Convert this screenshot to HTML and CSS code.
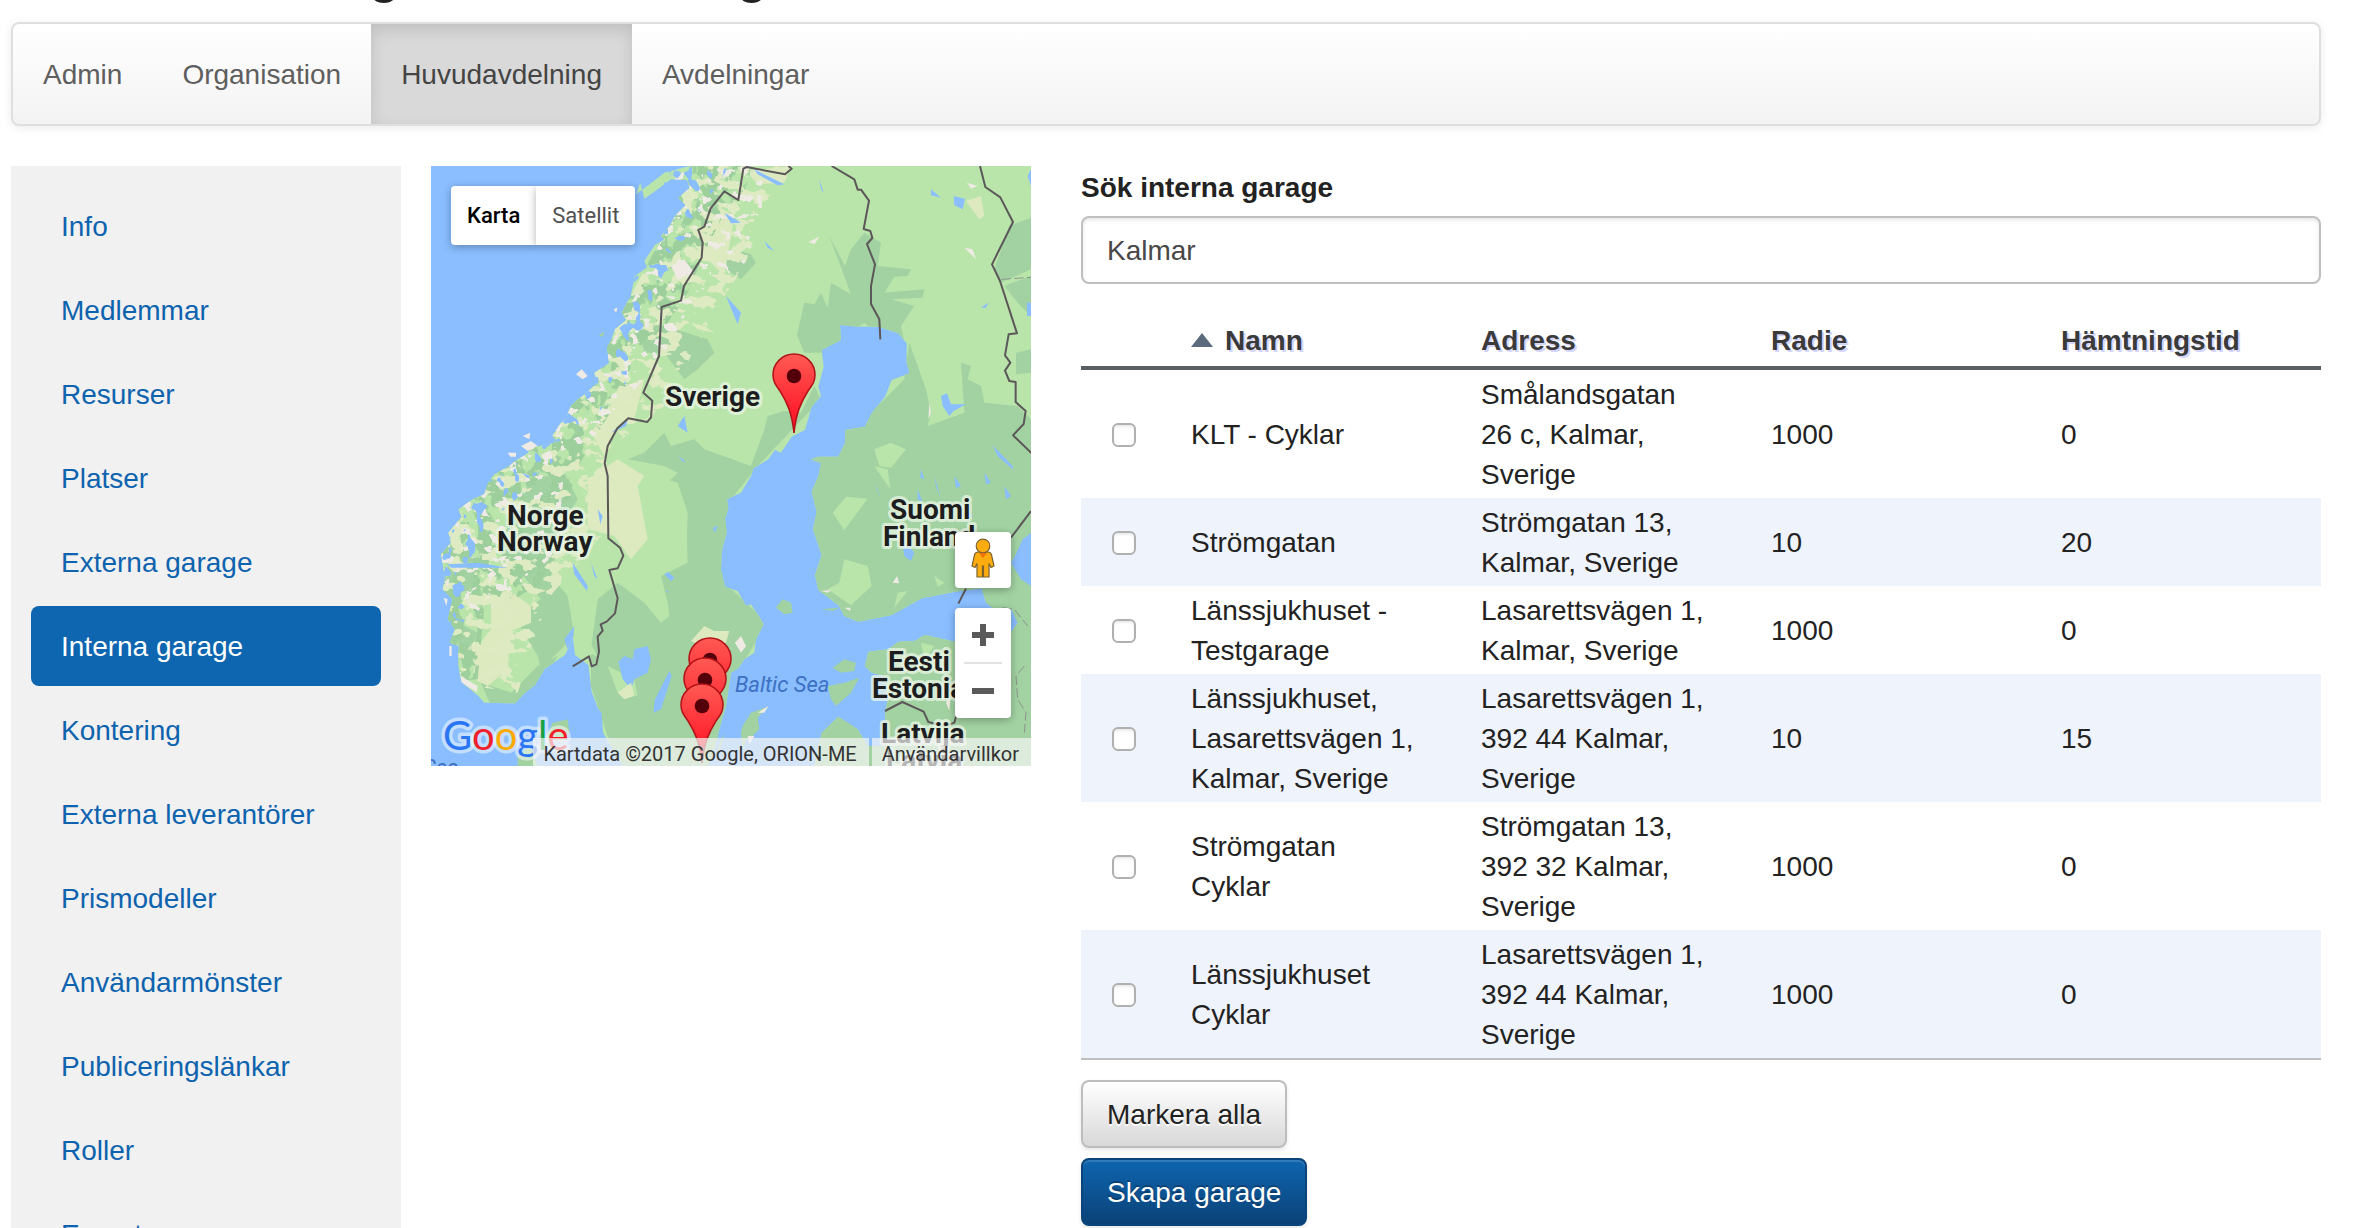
FILE: index.html
```html
<!DOCTYPE html>
<html lang="sv">
<head>
<meta charset="utf-8">
<title>Interna garage</title>
<link rel="stylesheet" href="styles.css">
</head>
<body>
<div class="page">
  <h1 class="title">Huvudavdelning Administrering</h1>
  <nav class="tabs">
    <a href="#">Admin</a>
    <a href="#">Organisation</a>
    <a href="#" class="active">Huvudavdelning</a>
    <a href="#">Avdelningar</a>
  </nav>
  <div class="columns">
    <nav class="sidebar">
      <a href="#">Info</a>
      <a href="#">Medlemmar</a>
      <a href="#">Resurser</a>
      <a href="#">Platser</a>
      <a href="#">Externa garage</a>
      <a href="#" class="active">Interna garage</a>
      <a href="#">Kontering</a>
      <a href="#">Externa leverantörer</a>
      <a href="#">Prismodeller</a>
      <a href="#">Användarmönster</a>
      <a href="#">Publiceringslänkar</a>
      <a href="#">Roller</a>
      <a href="#">Export</a>
    </nav>

    <section class="map" aria-label="Karta">
      <svg class="map-canvas" viewBox="0 0 600 600">
        <defs>
          <linearGradient id="pin-fill" x1="0" y1="0" x2="0" y2="1">
            <stop offset="0" stop-color="#ff5a54"/><stop offset="1" stop-color="#ff0a20"/>
          </linearGradient>
          <g id="pin">
            <path d="M0 80C-2 60-7 49-14 38C-19 31-21 28-21 22A21 21 0 0 1 21 22C21 28 19 31 14 38C7 49 2 60 0 80Z" fill="url(#pin-fill)" stroke="#b31217" stroke-width="1.5"/>
            <circle cy="23" r="7.3" fill="#54000a"/>
          </g>
          <filter id="dark" x="0" y="0" width="100%" height="100%" color-interpolation-filters="sRGB">
            <feTurbulence type="fractalNoise" baseFrequency=".022 .017" numOctaves="3" seed="4"/>
            <feColorMatrix values="0 0 0 0 .61  0 0 0 0 .81  0 0 0 0 .61  26 0 0 0 -12.2"/>
            <feComposite in2="SourceGraphic" operator="in"/>
          </filter>
          <filter id="beige" x="0" y="0" width="100%" height="100%" color-interpolation-filters="sRGB">
            <feTurbulence type="fractalNoise" baseFrequency=".02 .028" numOctaves="3" seed="11"/>
            <feColorMatrix values="0 0 0 0 .87  0 0 0 0 .92  0 0 0 0 .76  26 0 0 0 -14.3"/>
            <feComposite in2="SourceGraphic" operator="in"/>
          </filter>
          <filter id="snow" x="0" y="0" width="100%" height="100%" color-interpolation-filters="sRGB">
            <feTurbulence type="fractalNoise" baseFrequency=".03 .036" numOctaves="3" seed="23"/>
            <feColorMatrix values="0 0 0 0 .93  0 0 0 0 .92  0 0 0 0 .89  28 0 0 0 -17.8"/>
            <feComposite in2="SourceGraphic" operator="in"/>
          </filter>
          <filter id="fjord" x="0" y="0" width="100%" height="100%" color-interpolation-filters="sRGB">
            <feTurbulence type="fractalNoise" baseFrequency=".03 .024" numOctaves="2" seed="37"/>
            <feColorMatrix values="0 0 0 0 .54  0 0 0 0 .745  0 0 0 0 1  28 0 0 0 -17.2"/>
            <feComposite in2="SourceGraphic" operator="in"/>
          </filter>
          <clipPath id="land-clip"><use href="#land"/></clipPath>
        </defs>
        <rect width="600" height="600" fill="#8abeff"/>
        <g transform="scale(.333333)">
          <path id="land" fill="#b9e5ab" d="M775 0L700 20 652 58 615 85 628 50 640 98 680 70 720 40 768 42 776 66 742 96 764 118 732 150 718 178 690 210 700 222 672 236 640 285 648 304 612 330 600 385 572 440 586 462 552 490 540 522 528 545 534 590 522 600 490 620 500 650 455 690 440 700 420 720 400 765 390 770 362 812 372 830 300 845 290 862 252 885 235 900 190 925 172 947 160 985 125 1000 82 1030 92 1052 52 1100 60 1130 30 1165 42 1240 35 1270 65 1300 50 1360 72 1390 56 1430 82 1440 82 1500 92 1548 142 1590 160 1610 252 1612 282 1580 312 1557 340 1510 402 1467 420 1430 425 1410 432 1467 472 1497 482 1577 500 1625 512 1640 516 1700 550 1757 575 1800L830 1800 850 1757 862 1700 885 1620 900 1520 922 1507 940 1480 970 1460 975 1420 998 1375 980 1345 960 1315 945 1320 920 1275 882 1262 870 1210 872 1157 887 1097 882 1060 892 1027 888 1000 930 980 962 927 967 907 1012 880 1032 852 1050 860 1082 812 1122 792 1142 722 1170 690 1162 662 1178 602 1172 552 1230 522 1227 477 1282 482 1342 482 1402 502 1427 532 1427 592 1436 622 1382 642 1362 692 1322 742 1302 782 1242 792 1242 832 1222 872 1162 872 1140 880 1170 892 1162 930 1142 977 1157 1037 1146 1090 1172 1167 1152 1227 1162 1272 1222 1317 1240 1350 1282 1367 1382 1347 1472 1297 1572 1277 1652 1267 1665 1310 1690 1330 1742 1330 1760 1370 1740 1400 1700 1410 1640 1420 1572 1427 1482 1407 1450 1425 1402 1427 1372 1450 1312 1457 1302 1500 1322 1520 1362 1530 1372 1597 1362 1637 1366 1700 1355 1740 1310 1740 1280 1690 1222 1652 1172 1700 1150 1800L1800 1800V0Z"/>
          <g clip-path="url(#land-clip)">
            <g fill="#a2d2a2">
              <path d="M590 880L640 860 700 800 720 840 790 820 820 850 960 900 1000 790 1010 750 1060 735 1110 740 1150 660 1170 700 980 900 900 1000 880 1250 1010 1370 930 1500 860 1800 560 1800 480 1560 480 1450 500 1300 560 1250 640 1310 690 1370 715 1350 710 1310 690 1230 770 1190 765 1030 700 960 740 920 700 900Z"/>
              <path d="M1098 508L1120 410 1150 415 1170 380 1190 425 1200 350 1260 385 1195 210 1242 300 1260 250 1300 200 1350 230 1340 300 1440 310 1430 330 1390 332 1360 380 1480 370 1475 395 1380 400 1450 420 1410 480 1435 600 1300 470 1180 560 1120 560Z"/>
              <path d="M1300 760L1420 640 1435 530 1460 600 1485 670 1500 740 1490 780 1600 740 1590 590 1620 600 1610 640 1650 660 1660 710 1760 720 1800 760V1400H1240L1120 1290 1130 850Z"/>
              <path d="M1690 310L1735 180 1760 170 1800 155V310L1710 350ZM1720 360L1800 330V450L1760 410ZM1755 560L1800 550V620L1755 625Z"/>
              <path d="M1280 1430L1500 1380 1800 1290V1800H1120V1640Z"/>
              <path d="M882 280L910 250 960 265 975 290 930 340 900 320 882 310ZM620 470L700 480 830 520 850 560 800 610 760 640 700 560 640 560ZM300 940L400 920 440 1000 390 1080 360 1230 410 1290 430 1410 330 1510 320 1470 250 1350 330 1300 240 1180 240 1050ZM60 1120L130 1180 140 1260 40 1300ZM60 1360L140 1400 100 1500ZM150 1550L240 1580 320 1500 380 1470 300 1620H180Z"/>
            </g>
            <g fill="#b9e5ab">
              <path d="M1205 1040L1245 992 1310 998 1240 1092ZM1240 1180L1310 1200 1322 1260 1260 1318 1190 1270 1225 1250ZM1400 1280L1430 1275 1390 1325ZM1330 900L1370 910 1378 970ZM1330 850L1380 830 1425 850 1380 905 1345 900ZM1510 1230L1540 1250 1520 1262ZM1470 1430L1510 1440 1480 1480ZM1110 600L1160 560 1155 620Z"/>
              <path d="M555 1000L640 920 740 950 770 1040 765 1190 690 1230 660 1280 570 1250 545 1150ZM530 1500L610 1540 620 1590 560 1580ZM430 1410L460 1400 500 1470 430 1450Z"/>
            </g>
            <g fill="#dde9bf">
              <path d="M470 940L560 880 640 930 620 960 650 1120 600 1180 550 1110 470 1090ZM180 1300L230 1270 300 1320 300 1370 240 1395 230 1510 170 1560 130 1540 125 1460 180 1390ZM480 800L580 660 640 640 610 760 560 780 520 870ZM780 220L860 120 910 150 880 330 800 250ZM900 20L1080 0 1060 50 980 55 950 20ZM1605 105L1650 90 1660 150 1645 160ZM780 470L820 480 850 500 800 490Z"/>
            </g>
            <path filter="url(#dark)" d="M760 0L960 0 950 60 880 140 820 260 770 380 690 500 600 640 500 800 430 920 400 1100 330 1250 250 1300 160 1320 140 1540 0 1550 0 1000 340 800 540 500 700 200Z"/>
            <path filter="url(#beige)" d="M760 0L1050 0 990 160 940 300 860 420 700 720 520 860 560 1050 350 1300 260 1580 60 1550 0 1000 340 800 540 500 700 200Z"/>
            <path filter="url(#snow)" d="M740 0L1000 0 990 260 800 380 700 560 540 760 400 900 380 1150 260 1280 130 1360 0 1200 130 960 340 830 560 500 700 200Z"/>
            <path filter="url(#fjord)" d="M700 0L900 0 800 140 740 260 640 480 580 660 440 800 300 960 160 1080 100 1240 100 1440 0 1500 0 1000 340 780 540 480 680 200Z"/>
            <g fill="#8abeff">
              <path d="M562 1487L580 1470 605 1480 610 1450 650 1440 660 1480 650 1520 610 1540 600 1570 575 1540ZM667 1640L672 1600 715 1515 722 1530 690 1630ZM700 1225L712 1218 730 1235 720 1245ZM1530 690L1548 682 1560 715 1605 715 1568 735 1555 750 1535 720ZM1568 90L1602 98 1595 130 1570 118ZM1500 70L1530 95 1500 88ZM970 10L1060 55 1040 58 980 25ZM880 140L930 170 900 172ZM1000 225L1030 255 1010 245ZM885 390L930 440 920 475ZM1165 40L1178 80 1170 70ZM1650 425L1672 410 1665 425ZM1685 838L1745 900V910L1700 870ZM1752 1170L1775 1120 1800 1100V1260L1770 1240 1740 1190ZM740 870L760 882V890ZM740 780L760 750 770 800ZM540 800L590 760 585 780ZM500 1030L515 1050 508 1075ZM845 1085L860 1080 852 1100ZM700 1275H712V1280ZM1470 910L1480 940 1468 935ZM1330 950L1340 970 1350 1000ZM1410 1110L1450 1160 1440 1185 1420 1170ZM1510 930L1530 1000 1515 960ZM1600 1020L1625 1050 1610 1060ZM1570 930L1590 960 1575 965ZM1660 920L1680 950 1665 955ZM1720 960L1740 990 1725 1000ZM1460 970L1475 1010 1460 1000ZM1790 30L1800 10V60ZM1788 410H1800V450H1788Z"/>
              <path d="M425 1190L470 1260 468 1275 430 1225ZM480 1190L500 1240 490 1230ZM50 1195L140 1190 230 1205 60 1205ZM400 1420L430 1380 425 1420 410 1450Z"/>
            </g>
            <path fill="#efeae3" d="M1132 228L1165 212 1150 235ZM1608 50L1640 60 1620 68ZM1600 245L1625 250 1635 280ZM1495 710L1500 740 1492 760ZM1608 810L1632 835ZM1385 1250L1398 1230 1405 1252ZM1170 1275L1200 1272 1190 1280ZM1240 1325H1258V1335ZM912 1430L930 1410 945 1440 930 1460ZM80 1525L140 1560 138 1578 90 1550ZM1545 1610L1560 1580 1555 1635ZM1376 605L1392 600 1388 630ZM720 300L760 280 790 320 740 340Z"/>
            <path fill="#dde9bf" d="M780 1425L820 1380 850 1395 895 1395 885 1430 800 1435ZM560 1580L600 1550 610 1590 580 1600Z"/>
          </g>
          <g fill="#a2d2a2">
            <path d="M935 1680L960 1640 1010 1622 980 1655 985 1690 960 1715 945 1720 935 1760 930 1700ZM1190 1560L1240 1550 1285 1535 1260 1580 1215 1620 1200 1600ZM1205 1505L1240 1480 1275 1490 1270 1515 1230 1520ZM1035 1325L1055 1300 1080 1310 1085 1340 1060 1345ZM1170 1330L1225 1325 1205 1335ZM345 1715L365 1670 410 1660 415 1700 395 1730ZM260 1770L300 1740 320 1800H260ZM862 1740L880 1700 860 1780ZM502 510L520 495 515 512Z"/>
            <path fill="#efeae3" d="M435 625L452 610 470 630 455 640ZM230 860H255V872H238ZM270 840L300 825 320 840 290 855ZM275 810L298 800 295 820ZM548 430L560 425 555 440ZM980 1640L1012 1620 1000 1640ZM950 1710L970 1710 955 1735ZM55 1440H62V1470H55ZM38 1295L50 1300 46 1320Z"/>
          </g>
          <g fill="none" stroke="#5c5759" stroke-width="6" stroke-linejoin="round">
            <path d="M1072 0L1082 8 1062 25 947 3 937 8 922 102 880 76 839 127 820 182 802 192 815 230 812 275 759 360 750 404 692 423 684 570 637 680 664 704 660 754 649 768 592 757 559 787 530 840 521 892 530 930 532 1117 567 1145 577 1169 560 1207 535 1212 560 1297 552 1342 527 1367 509 1375 515 1394 500 1412 504 1457 496 1495 482 1501 474 1471 425 1501"/>
            <path d="M1202 0L1270 40 1280 71H1290L1314 104 1298 189 1318 195 1324 216 1308 234 1332 295 1320 360V414L1345 460 1348 520"/>
            <path d="M1647 0L1663 63 1708 94 1746 168 1683 295 1707 345 1758 502 1733 505 1722 568 1738 590 1722 614 1735 645 1754 648V708L1784 735 1778 774 1746 808 1802 862"/>
            <path d="M1800 1035L1740 1115M1605 1268L1582 1313M1362 1635L1414 1608 1478 1637 1492 1668 1540 1680 1570 1670 1578 1640"/>
            <path stroke="#8b9389" stroke-width="3" stroke-dasharray="28 10" d="M1712 340L1800 334M1715 1325L1750 1330 1790 1380M1780 1500L1755 1530 1760 1600 1785 1640 1780 1700"/>
          </g>
        </g>
        <g class="country">
          <text x="234" y="240">Sverige</text>
          <text x="76" y="359">Norge</text>
          <text x="66" y="385">Norway</text>
          <text x="459" y="353">Suomi</text>
          <text x="452" y="380">Finland</text>
          <text x="457" y="505">Eesti</text>
          <text x="441" y="532">Estonia</text>
          <text x="450" y="577">Latvija</text>
          <text x="455" y="604">Latvia</text>
        </g>
        <g class="sea">
          <text x="304" y="526">Baltic Sea</text>
          <text x="-8" y="609">Sea</text>
        </g>
        <use href="#pin" x="363" y="187"/>
        <use href="#pin" x="279" y="471"/>
        <use href="#pin" x="274" y="491"/>
        <use href="#pin" x="271" y="517"/>
        <text class="logo" x="12" y="584"><tspan fill="#2a75f3">G</tspan><tspan fill="#f0202b">o</tspan><tspan fill="#fbab00">o</tspan><tspan fill="#2a75f3">g</tspan><tspan fill="#17a144">l</tspan><tspan fill="#f0202b">e</tspan></text>
      </svg>
      <div class="map-type">
        <button type="button" class="selected">Karta</button>
        <button type="button">Satellit</button>
      </div>
      <div class="map-controls">
        <button type="button" class="pegman" aria-label="Street View">
          <svg width="24" height="40" viewBox="0 0 24 40">
            <g fill="#fcac0e" stroke="#7a6230" stroke-width="1.2">
              <path d="M7 14h10q3 0 3.500 3l2.500 11-3 1.500-2-4V39h-5.500V28h-1V39H6V25.500l-2 4L1 28l2.500-11q.5-3 3.500-3z"/>
              <circle cx="12" cy="8" r="6.800"/>
            </g>
            <path fill="#f0700c" d="M8 15h8l-4 5z"/>
          </svg>
        </button>
        <div class="zoom">
          <button type="button" aria-label="Zooma in"><svg width="22" height="22" viewBox="0 0 22 22"><path fill="#5a5a5a" d="M8 0h6v8h8v6h-8v8H8v-8H0V8h8z"/></svg></button>
          <button type="button" aria-label="Zooma ut"><svg width="22" height="22" viewBox="0 0 22 22"><path fill="#5a5a5a" d="M0 8h22v6H0z"/></svg></button>
        </div>
      </div>
      <div class="attribution">
        <span>Kartdata ©2017 Google, ORION-ME</span>
        <a href="#">Användarvillkor</a>
      </div>
    </section>

    <main class="garages">
      <label class="search-label" for="search">Sök interna garage</label>
      <input class="search" id="search" type="text" value="Kalmar">
      <table>
        <colgroup><col class="col-check"><col class="col-data"><col class="col-data"><col class="col-data"><col></colgroup>
        <thead>
          <tr><td></td><th scope="col"><svg class="sort" width="22" height="14" viewBox="0 0 22 14"><path fill="#5c6a7e" d="M11 0l11 14H0z"/></svg>Namn</th><th scope="col">Adress</th><th scope="col">Radie</th><th scope="col">Hämtningstid</th></tr>
        </thead>
        <tbody>
          <tr><td><input type="checkbox" aria-label="KLT - Cyklar"></td><td>KLT - Cyklar</td><td>Smålandsgatan 26 c, Kalmar, Sverige</td><td>1000</td><td>0</td></tr>
          <tr><td><input type="checkbox" aria-label="Strömgatan"></td><td>Strömgatan</td><td>Strömgatan 13, Kalmar, Sverige</td><td>10</td><td>20</td></tr>
          <tr><td><input type="checkbox" aria-label="Länssjukhuset - Testgarage"></td><td>Länssjukhuset - Testgarage</td><td>Lasarettsvägen 1, Kalmar, Sverige</td><td>1000</td><td>0</td></tr>
          <tr><td><input type="checkbox" aria-label="Länssjukhuset, Lasarettsvägen 1, Kalmar, Sverige"></td><td>Länssjukhuset, Lasarettsvägen 1, Kalmar, Sverige</td><td>Lasarettsvägen 1, 392 44 Kalmar, Sverige</td><td>10</td><td>15</td></tr>
          <tr><td><input type="checkbox" aria-label="Strömgatan Cyklar"></td><td>Strömgatan Cyklar</td><td>Strömgatan 13, 392 32 Kalmar, Sverige</td><td>1000</td><td>0</td></tr>
          <tr><td><input type="checkbox" aria-label="Länssjukhuset Cyklar"></td><td>Länssjukhuset Cyklar</td><td>Lasarettsvägen 1, 392 44 Kalmar, Sverige</td><td>1000</td><td>0</td></tr>
        </tbody>
      </table>
      <div class="actions">
        <button type="button" class="btn">Markera alla</button>
        <button type="button" class="btn primary">Skapa garage</button>
      </div>
    </main>
  </div>
</div>
</body>
</html>
```

FILE: styles.css
```css
* { box-sizing: border-box; }
body {
  margin: 0;
  background: #fff;
  color: #222;
  font: 28px/40px "Liberation Sans", Arial, sans-serif;
}
a { text-decoration: none; }
button, input { font: inherit; color: inherit; }

.page { padding: 0 39px 0 11px; }
.title {
  margin: -54px 0 16px;
  font-size: 50px;
  line-height: 60px;
}

/* top tabs */
.tabs {
  display: flex;
  margin-bottom: 40px;
  border: 2px solid #dfdfdf;
  border-radius: 8px;
  background: linear-gradient(#fff, #f3f3f3);
  box-shadow: 0 2px 10px rgba(0, 0, 0, .08);
}
.tabs a {
  padding: 31px 30px 29px;
  color: #5e5e5e;
}
.tabs .active {
  background: #d9d9d9;
  color: #444;
  box-shadow: inset 0 6px 16px rgba(0, 0, 0, .12);
}

.columns {
  display: grid;
  grid-template-columns: 39fr 60fr 126fr;
  column-gap: 30px;
  align-items: start;
}

/* side menu */
.sidebar {
  display: flex;
  flex-direction: column;
  gap: 4px;
  padding: 20px;
  background: #f1f1f1;
}
.sidebar a {
  padding: 21px 30px 19px;
  border-radius: 8px;
  color: #0e63ae;
}
.sidebar .active {
  background: #0e65b0;
  color: #fff;
}

/* map */
.map {
  position: relative;
  aspect-ratio: 1;
  overflow: hidden;
  font-family: Roboto, sans-serif;
}
.map-canvas { display: block; width: 100%; }
.country {
  font-size: 28px;
  font-weight: 700;
  fill: #1d1d1f;
  stroke: rgba(235, 245, 230, .75);
  stroke-width: 6px;
  stroke-linejoin: round;
  paint-order: stroke;
}
.sea {
  font-size: 22px;
  font-style: italic;
  fill: #3c70c4;
}
.logo {
  font: 40px Lato, sans-serif;
  stroke: rgba(255, 255, 255, .5);
  stroke-width: 7px;
  stroke-linejoin: round;
  paint-order: stroke;
}
.map-type {
  position: absolute;
  top: 20px;
  left: 20px;
  display: flex;
  font-size: 22px;
}
.map-type button {
  padding: 10px 16px 9px;
  border: 0;
  background: #fff;
  color: #505050;
  box-shadow: 0 2px 8px rgba(0, 0, 0, .3);
}
.map-type .selected {
  border-radius: 4px 0 0 4px;
  color: #000;
  font-weight: 500;
}
.map-type button:last-child { border-radius: 0 4px 4px 0; }
.map-controls {
  position: absolute;
  right: 20px;
  bottom: 48px;
  display: grid;
  gap: 20px;
  width: 56px;
}
.map-controls button {
  display: grid;
  place-items: center;
  width: 100%;
  padding: 0;
  border: 0;
  background: none;
}
.map-controls .pegman,
.zoom {
  border-radius: 4px;
  background: #fff;
  box-shadow: 0 2px 8px rgba(0, 0, 0, .3);
}
.map-controls .pegman {
  height: 56px;
  padding-bottom: 4px;
}
.zoom { padding: 0 9px; }
.zoom button { height: 54px; }
.zoom button + button { border-top: 2px solid #e2e2e2; height: 56px; }
.attribution {
  position: absolute;
  right: 0;
  bottom: 0;
  display: flex;
  gap: 3px;
  font-size: 20px;
  line-height: 28px;
  white-space: nowrap;
}
.attribution > * {
  padding: 2px 12px 0 10px;
  height: 28px;
  background: rgba(245, 245, 245, .7);
  color: #333;
}

/* garage search and list */
.garages { padding-left: 20px; }
.search-label {
  display: block;
  padding-top: 2px;
  margin-bottom: 8px;
  font-weight: 700;
}
.search {
  display: block;
  width: 100%;
  height: 68px;
  padding: 2px 24px 0;
  border: 2px solid #bfbfbf;
  border-radius: 8px;
  color: #484848;
  box-shadow: inset 0 2px 4px rgba(0, 0, 0, .1);
}
table {
  width: 100%;
  margin-top: 30px;
  border-collapse: separate;
  border-spacing: 0;
  table-layout: fixed;
  border-bottom: 2px solid #bfbfbf;
}
.col-check { width: 86px; }
.col-data { width: 290px; }
thead th, thead td {
  padding: 7px 24px 5px;
  border-bottom: 4px solid #575e63;
  color: #3a3a3a;
  text-align: left;
  text-shadow: 2px 2px 0 #d5d5fa;
}
.sort { margin: 0 12px 6px 0; vertical-align: middle; }
tbody td { padding: 5px 36px 3px 24px; }
tbody td:first-child {
  padding: 0 0 2px;
  text-align: center;
}
tbody tr:nth-child(even) { background: #eff3fb; }
input[type="checkbox"] {
  appearance: none;
  width: 24px;
  height: 24px;
  margin: 0;
  border: 2px solid #b0b0b0;
  border-radius: 6px;
  background: #fff;
  box-shadow: inset 0 2px 2px rgba(0, 0, 0, .08);
  vertical-align: middle;
}
.actions {
  display: flex;
  flex-direction: column;
  align-items: flex-start;
  gap: 10px;
  margin-top: 20px;
}
.btn {
  height: 68px;
  padding: 2px 24px 0;
  border: 2px solid #bdbdbd;
  border-radius: 8px;
  background: linear-gradient(#fff, #d8d8d8);
  box-shadow: 0 2px 4px rgba(0, 0, 0, .1);
  text-shadow: 0 2px 0 #fff;
}
.primary {
  border-color: #0a447b;
  background: linear-gradient(#0e65b0, #0b4277);
  color: #fff;
  box-shadow: inset 0 2px 0 rgba(255, 255, 255, .15), 0 2px 4px rgba(0, 0, 0, .1);
  text-shadow: 0 -2px 0 rgba(0, 0, 0, .25);
}
```
